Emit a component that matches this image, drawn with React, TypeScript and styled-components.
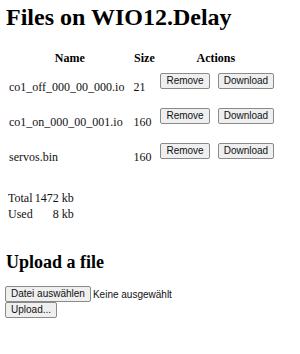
import styled, { createGlobalStyle } from "styled-components";

const GlobalStyle = createGlobalStyle`
	html, body {
		margin: 0;
		padding: 0;
		background: #fff;
	}
	body {
		font-family: "Liberation Serif", "Times New Roman", serif;
		font-size: 12px;
		color: #111;
	}
`;

const files = [
	{ name: "co1_off_000_00_000.io", size: 21 },
	{ name: "co1_on_000_00_001.io", size: 160 },
	{ name: "servos.bin", size: 160 },
];

const Page = styled.main`
	padding: 4px 6px;
`;
const Title = styled.h1`
	margin: 0 0 17px;
	font-size: 24px;
	font-weight: 700;
	color: #000;
`;
const FileTable = styled.table`
	border-spacing: 2px;
	th {
		font-weight: 700;
		padding: 1px 0 3px;
		text-align: center;
		color: #000;
	}
	td {
		padding: 1px 4px 1px 0;
		vertical-align: middle;
	}
	td:first-child {
		padding: 1px 7px 1px 1px;
	}
`;
const ActionCell = styled.td`
	&& {
		vertical-align: top;
		padding: 2px 0 1px 3px;
	}
`;
const Actions = styled.div`
	display: flex;
	gap: 8px;
	margin-bottom: 14px;
`;
const Button = styled.button`
	font-family: "Liberation Sans", Arial, sans-serif;
	font-size: 10px;
	color: #111;
	background: #efefef;
	border: 1px solid #8a8a8a;
	border-radius: 2px;
	height: 16px;
	padding: 0 5px;
	line-height: 14px;
	margin: 0;
`;
const Summary = styled.table`
	margin-top: 14px;
	border-spacing: 0;
	td {
		padding: 0 0 0 2px;
		line-height: 16px;
	}
`;
const Amount = styled.td`
	text-align: right;
`;
const Subtitle = styled.h2`
	margin: 30px 0 13px;
	font-size: 18px;
	font-weight: 700;
	color: #000;
`;
const Picker = styled.div`
	display: flex;
	align-items: center;
	gap: 2px;
	font-family: "Liberation Sans", Arial, sans-serif;
	font-size: 10px;
	color: #111;
	margin-left: -1px;
`;
const UploadRow = styled.div`
	margin-left: -1px;
`;

export default function App(): JSX.Element {
	return (
		<Page>
			<GlobalStyle />
			<Title>Files on WIO12.Delay</Title>
			<FileTable>
				<thead>
					<tr>
						<th>Name</th>
						<th>Size</th>
						<th>Actions</th>
					</tr>
				</thead>
				<tbody>
					{files.map((file) => (
						<tr key={file.name}>
							<td>{file.name}</td>
							<td>{file.size}</td>
							<ActionCell>
								<Actions>
									<Button>Remove</Button>
									<Button>Download</Button>
								</Actions>
							</ActionCell>
						</tr>
					))}
				</tbody>
			</FileTable>
			<Summary>
				<tbody>
					<tr>
						<td>Total</td>
						<Amount>1472 kb</Amount>
					</tr>
					<tr>
						<td>Used</td>
						<Amount>8 kb</Amount>
					</tr>
				</tbody>
			</Summary>
			<Subtitle>Upload a file</Subtitle>
			<Picker>
				<Button>Datei auswählen</Button>
				<span>Keine ausgewählt</span>
			</Picker>
			<UploadRow>
				<Button>Upload...</Button>
			</UploadRow>
		</Page>
	);
}
